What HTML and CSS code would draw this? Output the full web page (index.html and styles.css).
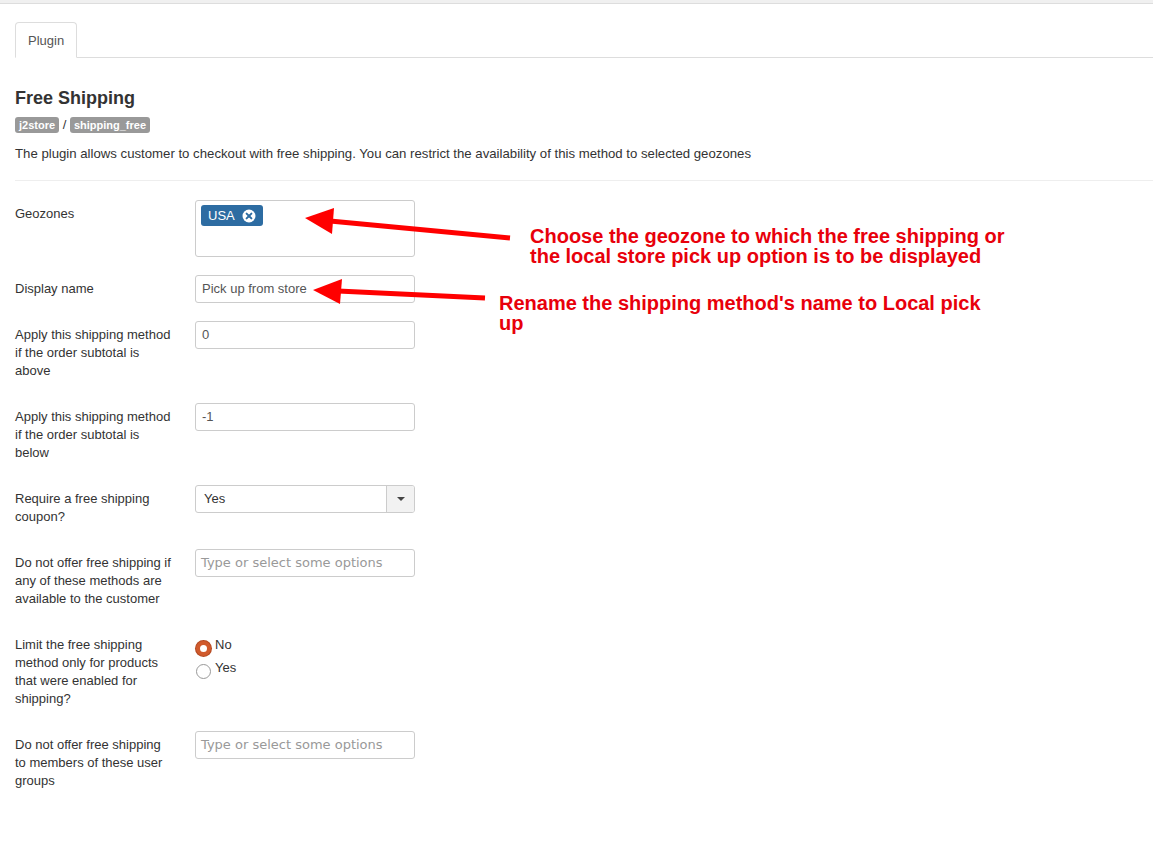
FILE: index.html
```html
<!DOCTYPE html>
<html lang="en">
<head>
    <meta charset="UTF-8">
    <title>Free Shipping - Plugin</title>
    <link rel="stylesheet" href="styles.css">
</head>
<body>

    <div class="topbar"></div>

    <div class="page">
        <ul class="nav-tabs">
            <li class="active"><a>Plugin</a></li>
        </ul>

        <div class="tab-content">
            <h2 class="plugin-title">Free Shipping</h2>
            <div class="plugin-path">
                <span class="badge">j2store</span> / <span class="badge">shipping_free</span>
            </div>
            <p class="plugin-desc">The plugin allows customer to checkout with free shipping. You can restrict the availability of this method to selected geozones</p>
            <hr>

            <div class="form-horizontal">
                <div class="control-group">
                    <label class="control-label">Geozones</label>
                    <div class="controls">
                        <div class="chosen-multi">
                            <span class="chosen-tag">USA
                                <svg class="tag-close" width="14" height="14" viewBox="0 0 14 14">
                                    <circle cx="7" cy="7" r="6.5" fill="#fff"/>
                                    <path d="M4.6 4.6 L9.4 9.4 M9.4 4.6 L4.6 9.4" stroke="#2d6ca2" stroke-width="2" stroke-linecap="round"/>
                                </svg>
                            </span>
                        </div>
                    </div>
                </div>

                <div class="control-group">
                    <label class="control-label">Display name</label>
                    <div class="controls">
                        <div class="input">Pick up from store</div>
                    </div>
                </div>

                <div class="control-group">
                    <label class="control-label">Apply this shipping method if the order subtotal is above</label>
                    <div class="controls">
                        <div class="input">0</div>
                    </div>
                </div>

                <div class="control-group">
                    <label class="control-label">Apply this shipping method if the order subtotal is below</label>
                    <div class="controls">
                        <div class="input">-1</div>
                    </div>
                </div>

                <div class="control-group">
                    <label class="control-label">Require a free shipping coupon?</label>
                    <div class="controls">
                        <div class="chosen-single">
                            <span class="value">Yes</span>
                            <span class="caret-box"><span class="caret"></span></span>
                        </div>
                    </div>
                </div>

                <div class="control-group">
                    <label class="control-label">Do not offer free shipping if any of these methods are available to the customer</label>
                    <div class="controls">
                        <div class="input placeholder">Type or select some options</div>
                    </div>
                </div>

                <div class="control-group">
                    <label class="control-label">Limit the free shipping method only for products that were enabled for shipping?</label>
                    <div class="controls radios">
                        <div class="radio"><span class="radio-dot checked"></span>No</div>
                        <div class="radio"><span class="radio-dot"></span>Yes</div>
                    </div>
                </div>

                <div class="control-group">
                    <label class="control-label">Do not offer free shipping to members of these user groups</label>
                    <div class="controls">
                        <div class="input placeholder">Type or select some options</div>
                    </div>
                </div>
            </div>
        </div>
    </div>

    <!-- annotations drawn over the screenshot -->
    <svg class="arrows" width="1153" height="850" viewBox="0 0 1153 850">
        <line x1="510" y1="238" x2="330" y2="221" stroke="#f00" stroke-width="5"/>
        <polygon points="305,218 334,208 332,234" fill="#f00"/>
        <line x1="485" y1="298" x2="338" y2="291" stroke="#f00" stroke-width="5"/>
        <polygon points="313,290 342,279 340,304" fill="#f00"/>
    </svg>
    <div class="note note-geozone">Choose the geozone to which the free shipping or<br>the local store pick up option is to be displayed</div>
    <div class="note note-name">Rename the shipping method's name to Local pick<br>up</div>

</body>
</html>
```

FILE: styles.css
```css
body {
    margin: 0;
    font-family: "Liberation Sans", Arial, sans-serif;
    font-size: 13px;
    line-height: 18px;
    color: #333;
    background: #fff;
}

.topbar {
    height: 3px;
    background: #f0f0f0;
    border-bottom: 1px solid #ddd;
}

.page {
    padding-left: 15px;
}

/* Tabs */
.nav-tabs {
    list-style: none;
    margin: 18px 0 0;
    padding: 0;
    display: flex;
    border-bottom: 1px solid #ddd;
}
.nav-tabs li {
    margin-bottom: -1px;
}
.nav-tabs li a {
    display: block;
    padding: 9px 12px 7px;
    line-height: 18px;
    color: #555;
    border: 1px solid #ddd;
    border-bottom-color: #fff;
    border-radius: 4px 4px 0 0;
    background: #fff;
}

/* Header block */
.plugin-title {
    margin: 30px 0 0;
    font-size: 18px;
    line-height: 20px;
    font-weight: bold;
    color: #333;
}
.plugin-path {
    margin-top: 8px;
    line-height: 18px;
    color: #333;
}
.badge {
    display: inline-block;
    padding: 0 4px;
    line-height: 16px;
    font-size: 11px;
    font-weight: bold;
    color: #fff;
    background: #999;
    border-radius: 3px;
}
.plugin-desc {
    margin: 11px 0 0;
    font-size: 13.2px;
}
hr {
    margin: 17px 0 19px;
    border: 0;
    border-top: 1px solid #eee;
}

/* Form */
.control-group {
    display: flex;
    margin-bottom: 18px;
}
.control-label {
    width: 160px;
    padding: 5px 0;
    margin-right: 20px;
}
.controls {
    width: 220px;
}

.input {
    box-sizing: border-box;
    height: 28px;
    padding: 4px 6px;
    line-height: 18px;
    color: #555;
    border: 1px solid #ccc;
    border-radius: 3px;
    background: #fff;
}
.input.placeholder {
    padding-left: 5px;
    font-family: "DejaVu Sans", sans-serif;
    font-size: 13px;
    color: #999;
}

.chosen-multi {
    box-sizing: border-box;
    height: 57px;
    padding: 4px 5px;
    border: 1px solid #ccc;
    border-radius: 3px;
}
.chosen-tag {
    display: inline-flex;
    align-items: center;
    gap: 7px;
    height: 21px;
    padding: 0 7px;
    color: #fff;
    background: #2d6ca2;
    border-radius: 3px;
    line-height: 21px;
}

.chosen-single {
    box-sizing: border-box;
    display: flex;
    height: 28px;
    border: 1px solid #ccc;
    border-radius: 3px;
    overflow: hidden;
}
.chosen-single .value {
    flex: 1;
    padding: 4px 8px;
    line-height: 18px;
    color: #333;
}
.chosen-single .caret-box {
    width: 27px;
    display: flex;
    align-items: center;
    justify-content: center;
    background: #f2f2f2;
    border-left: 1px solid #ccc;
}
.caret {
    width: 0;
    height: 0;
    border-left: 4px solid transparent;
    border-right: 4px solid transparent;
    border-top: 4px solid #444;
}

/* Radios */
.radios {
    padding-top: 5px;
}
.radio {
    display: flex;
    height: 23px;
    line-height: 18px;
    color: #333;
}
.radio-dot {
    box-sizing: border-box;
    width: 15px;
    height: 15px;
    margin: 5px 4px 0 1px;
    border-radius: 50%;
    border: 1px solid #999;
    background: #fff;
}
.radio-dot.checked {
    border: 4.5px solid #d05a2c;
    background: #fff;
    box-shadow: 0 0 0 1px #b44a22;
}

/* Annotation overlay */
.arrows {
    position: absolute;
    top: 0;
    left: 0;
    pointer-events: none;
}
.note {
    position: absolute;
    font-family: "Liberation Sans", Arial, sans-serif;
    font-size: 20px;
    font-weight: bold;
    line-height: 20px;
    color: #e8000b;
}
.note-geozone {
    left: 530px;
    top: 226px;
}
.note-name {
    left: 499px;
    top: 293px;
}
```
